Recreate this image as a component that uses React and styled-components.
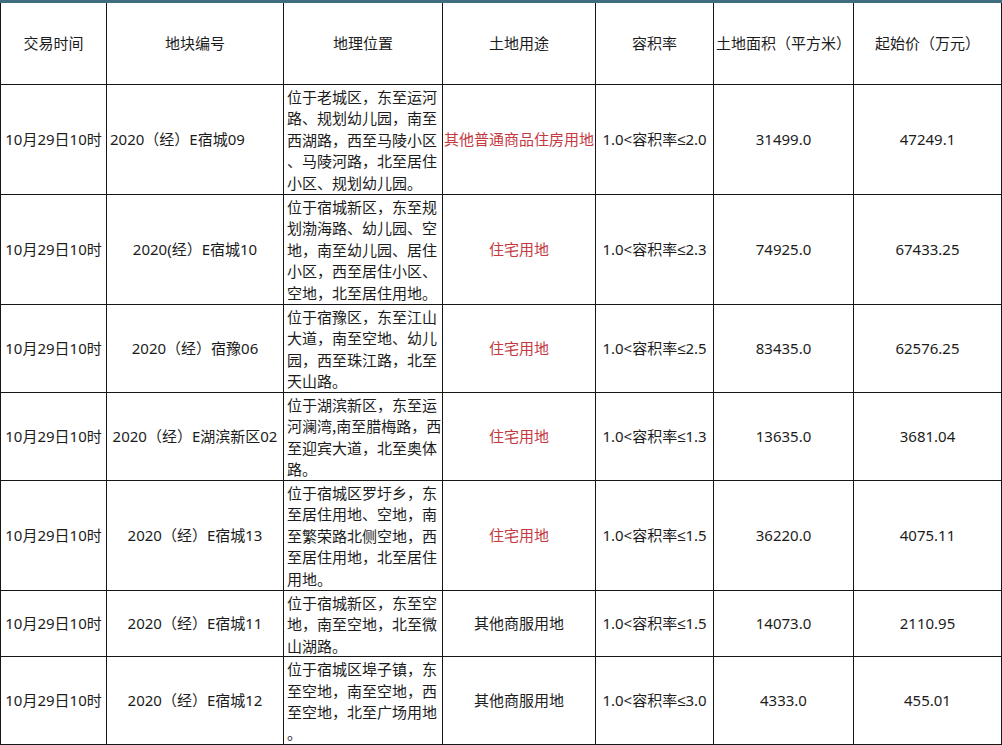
import React from "react";
import styled, { createGlobalStyle } from "styled-components";

const GlobalStyle = createGlobalStyle`
  html, body {
    margin: 0;
    padding: 0;
    background: #ffffff;
  }
  body {
    font-family: "Noto Sans", "Liberation Sans", "Noto Sans CJK SC", sans-serif;
    color: #1c1c1c;
  }
`;

const columns = [
  { title: "交易时间", width: 106 },
  { title: "地块编号", width: 177 },
  { title: "地理位置", width: 159 },
  { title: "土地用途", width: 153 },
  { title: "容积率", width: 118 },
  { title: "土地面积（平方米）", width: 140 },
  { title: "起始价（万元）", width: 148 },
];

const rows = [
  {
    time: "10月29日10时",
    code: "2020（经）E宿城09",
    codeLeft: true,
    place: "位于老城区，东至运河路、规划幼儿园，南至西湖路，西至马陵小区、马陵河路，北至居住小区、规划幼儿园。",
    use: "其他普通商品住房用地",
    red: true,
    ratio: "1.0<容积率≤2.0",
    area: "31499.0",
    price: "47249.1",
    height: 110,
  },
  {
    time: "10月29日10时",
    code: "2020(经）E宿城10",
    place: "位于宿城新区，东至规划渤海路、幼儿园、空地，南至幼儿园、居住小区，西至居住小区、空地，北至居住用地。",
    use: "住宅用地",
    red: true,
    ratio: "1.0<容积率≤2.3",
    area: "74925.0",
    price: "67433.25",
    height: 110,
  },
  {
    time: "10月29日10时",
    code: "2020（经）宿豫06",
    place: "位于宿豫区，东至江山大道，南至空地、幼儿园，西至珠江路，北至天山路。",
    use: "住宅用地",
    red: true,
    ratio: "1.0<容积率≤2.5",
    area: "83435.0",
    price: "62576.25",
    height: 88,
  },
  {
    time: "10月29日10时",
    code: "2020（经）E湖滨新区02",
    place: "位于湖滨新区，东至运河澜湾,南至腊梅路，西至迎宾大道，北至奥体路。",
    use: "住宅用地",
    red: true,
    ratio: "1.0<容积率≤1.3",
    area: "13635.0",
    price: "3681.04",
    height: 88,
  },
  {
    time: "10月29日10时",
    code: "2020（经）E宿城13",
    place: "位于宿城区罗圩乡，东至居住用地、空地，南至繁荣路北侧空地，西至居住用地，北至居住用地。",
    use: "住宅用地",
    red: true,
    ratio: "1.0<容积率≤1.5",
    area: "36220.0",
    price: "4075.11",
    height: 110,
  },
  {
    time: "10月29日10时",
    code: "2020（经）E宿城11",
    place: "位于宿城新区，东至空地，南至空地，北至微山湖路。",
    use: "其他商服用地",
    ratio: "1.0<容积率≤1.5",
    area: "14073.0",
    price: "2110.95",
    height: 66,
  },
  {
    time: "10月29日10时",
    code: "2020（经）E宿城12",
    place: "位于宿城区埠子镇，东至空地，南至空地，西至空地，北至广场用地。",
    use: "其他商服用地",
    ratio: "1.0<容积率≤3.0",
    area: "4333.0",
    price: "455.01",
    height: 88,
  },
];

const Sheet = styled.table`
  border-collapse: collapse;
  table-layout: fixed;
  width: 1001px;
  font-size: 15px;
  line-height: 21.4px;
`;

const HeadRow = styled.tr`
  height: 83px;
`;

const HeadCell = styled.th`
  border: 1px solid #161616;
  border-top: 3px solid #3d6d7e;
  font-weight: 400;
  text-align: center;
  vertical-align: middle;
  padding: 0;
  white-space: nowrap;
`;

const Row = styled.tr`
  height: ${(p) => p.$h}px;
`;

const Cell = styled.td`
  border: 1px solid #161616;
  padding: 0 ${(p) => (p.$left ? "3px" : "0")};
  text-align: ${(p) => (p.$left ? "left" : "center")};
  vertical-align: middle;
  white-space: nowrap;
  color: ${(p) => (p.$red ? "#c43a3f" : "#1c1c1c")};
`;

const PlaceCell = styled.td`
  border: 1px solid #161616;
  padding: 1px 0 0 3px;
  text-align: left;
  vertical-align: top;
  font-family: "Noto Sans CJK SC", sans-serif;
  word-break: break-all;
  line-break: anywhere;
`;

export default function App() {
  return (
    <>
      <GlobalStyle />
      <Sheet>
        <colgroup>
          {columns.map((c) => (
            <col key={c.title} style={{ width: c.width }} />
          ))}
        </colgroup>
        <thead>
          <HeadRow>
            {columns.map((c) => (
              <HeadCell key={c.title}>{c.title}</HeadCell>
            ))}
          </HeadRow>
        </thead>
        <tbody>
          {rows.map((r) => (
            <Row key={r.code} $h={r.height}>
              <Cell>{r.time}</Cell>
              <Cell $left={r.codeLeft}>{r.code}</Cell>
              <PlaceCell>{r.place}</PlaceCell>
              <Cell $red={r.red}>{r.use}</Cell>
              <Cell>{r.ratio}</Cell>
              <Cell>{r.area}</Cell>
              <Cell>{r.price}</Cell>
            </Row>
          ))}
        </tbody>
      </Sheet>
    </>
  );
}
